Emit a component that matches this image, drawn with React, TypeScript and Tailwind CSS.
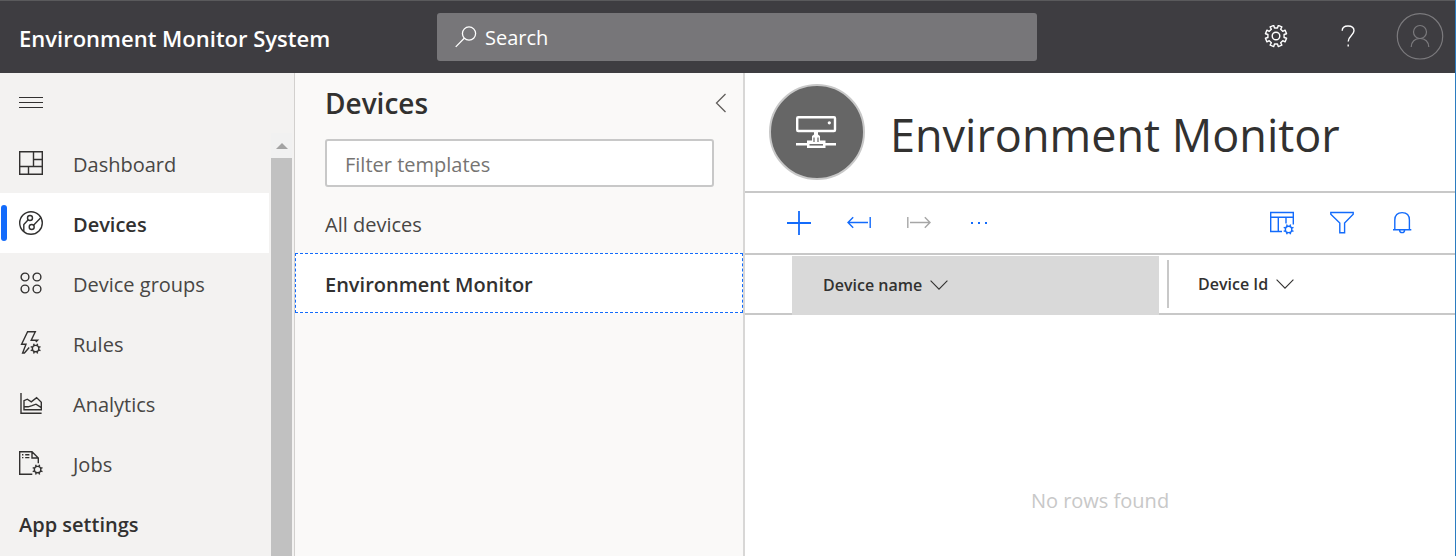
import React from "react";

function gearPath(cx: number, cy: number, outer: number, inner: number, teeth = 8) {
  const step = (Math.PI * 2) / teeth;
  const at = (r: number, a: number) =>
    `${(cx + r * Math.cos(a)).toFixed(2)} ${(cy + r * Math.sin(a)).toFixed(2)}`;
  const points: string[] = [];
  for (let i = 0; i < teeth; i++) {
    const a = i * step - Math.PI / 2 + step / 2;
    points.push(at(inner, a - step * 0.27), at(outer, a - step * 0.23), at(outer, a + step * 0.23), at(inner, a + step * 0.27));
  }
  return `M${points.join("L")}Z`;
}

/* Eight short spokes around a ring, used as a badge on larger icons. */
function MiniGear({ cx, cy }: { cx: number; cy: number }) {
  const spokes = Array.from({ length: 8 }, (_, i) => {
    const a = (i * Math.PI) / 4 + Math.PI / 8;
    const c = Math.cos(a);
    const s = Math.sin(a);
    return `M${(cx + 3.2 * c).toFixed(2)} ${(cy + 3.2 * s).toFixed(2)}L${(cx + 5.3 * c).toFixed(2)} ${(cy + 5.3 * s).toFixed(2)}`;
  }).join("");
  return (
    <>
      <circle cx={cx} cy={cy} r="3.2" />
      <path d={spokes} />
    </>
  );
}

function Icon({ children, className = "size-6" }: { children: React.ReactNode; className?: string }) {
  return (
    <svg viewBox="0 0 24 24" fill="none" stroke="currentColor" strokeWidth="1.4" aria-hidden="true" className={`${className} shrink-0`}>
      {children}
    </svg>
  );
}

const navItems = [
  {
    label: "Dashboard",
    icon: <path d="M.7.7H23.3V23.3H.7ZM14.5.7V15.5M.7 15.5H23.3M14.5 8.5H23.3M9.5 15.5V23.3" />,
  },
  {
    label: "Devices",
    active: true,
    icon: (
      <>
        <circle cx="12" cy="12" r="11.3" />
        <circle cx="11" cy="7" r="2.5" />
        <circle cx="12.7" cy="16" r="2.5" />
        <path d="M9.2 8.8 4.8 13.6V20.5M14.5 14.2 22 6.6" />
      </>
    ),
  },
  {
    label: "Device groups",
    icon: (
      <>
        <circle cx="6" cy="6" r="3.9" />
        <circle cx="18" cy="6" r="3.9" />
        <circle cx="6" cy="18" r="3.9" />
        <circle cx="18" cy="18" r="3.9" />
      </>
    ),
  },
  {
    label: "Rules",
    icon: (
      <>
        <path d="M10.2 16.5 5.4 22H3.6L7 13.2H2.6L8.6.8H16.3L12.2 9.2H18.6L16.8 11" />
        <MiniGear cx={16.6} cy={17.6} />
      </>
    ),
  },
  {
    label: "Analytics",
    icon: <path d="M2 2V22.2H22.6M5 18.8V9.7L8.3 8.2 12.3 10.8 17.6 6.6 22.3 11.3V18.8ZM5 15.8H9.2L13 14.6 17 13.2 22.3 16.6" />,
  },
  {
    label: "Jobs",
    icon: (
      <>
        <path d="M13.3 23.3H.7V.7H13L19.3 7V12.3M13 .7V7H19.3M3 3.7H4.4M6.2 3.7H10.4M3 6.6H4.4M6.2 6.6H10.4" />
        <MiniGear cx={18.6} cy={18.6} />
      </>
    ),
  },
];

function Header() {
  return (
    <header className="flex h-[73px] shrink-0 items-center border-t border-[#5a5a5c] bg-[#3e3d41] pr-[11px] text-white">
      <h1 className="w-[437px] shrink-0 pl-[19px] pt-0.5 text-[22px] font-semibold">Environment Monitor System</h1>
      <label className="flex h-12 max-w-[600px] flex-1 items-center gap-2 rounded-[3px] bg-[#777679] pl-[18px]">
        <Icon className="size-[22px]">
          <circle cx="15.3" cy="8.2" r="7.2" />
          <path d="M10.1 13.4 .8 22.8" />
        </Icon>
        <input
          type="search"
          aria-label="Search"
          placeholder="Search"
          className="min-w-0 flex-1 bg-transparent pt-0.5 text-xl outline-none placeholder:text-white"
        />
      </label>
      <div className="ml-auto flex items-center gap-12">
        <button type="button" aria-label="Settings">
          <Icon>
            <path d={gearPath(12, 11, 10.8, 8.2)} strokeLinejoin="round" />
            <circle cx="12" cy="11" r="3.8" />
          </Icon>
        </button>
        <button type="button" aria-label="Help">
          <Icon>
            <path d="M6.2 5.8C6.2 2.6 8.6 1 12 1S18 2.8 18 5.8C18 10 12.2 11 12.2 16.4M12.2 19.6V21.4" />
          </Icon>
        </button>
        <button type="button" aria-label="Account" className="-ml-3 text-[#7b7a7d]">
          <svg viewBox="0 0 48 48" fill="none" stroke="currentColor" strokeWidth="1.2" aria-hidden="true" className="size-12">
            <circle cx="24" cy="23.3" r="22.7" />
            <circle cx="24" cy="19" r="6.5" />
            <path d="M15.2 34C15.2 28.6 19 25.5 24 25.5S32.8 28.6 32.8 34" />
          </svg>
        </button>
      </div>
    </header>
  );
}

function SideNav() {
  return (
    <nav className="flex w-[295px] shrink-0 flex-col border-r border-[#d2d0ce] bg-[#f3f2f1] text-[#323130]">
      <button type="button" aria-label="Toggle navigation" className="flex h-[60px] shrink-0 items-center pl-[19px]">
        <Icon>
          <path d="M0 6.5H24M0 11.5H24M0 16.5H24" strokeWidth="1" />
        </Icon>
      </button>
      <div className="flex flex-1 justify-between">
        <div className="w-[269px]">
          <ul>
            {navItems.map((item) => (
              <li key={item.label} className={item.active ? "bg-white font-semibold" : "text-[#484644]"}>
                <a href="#" className="flex h-[60px] items-center">
                  <span className={item.active ? "ml-px h-9 w-1.5 rounded-[3px] bg-[#136bfb]" : "ml-px h-9 w-1.5"} />
                  <span className="ml-3 text-[#323130]">
                    <Icon>{item.icon}</Icon>
                  </span>
                  <span className="ml-[30px] pt-1 text-xl">{item.label}</span>
                </a>
              </li>
            ))}
          </ul>
          <h2 className="flex h-[60px] items-center pl-[19px] pt-1 text-xl font-semibold">App settings</h2>
        </div>
        <div className="mr-0.5 flex w-[21px] flex-col bg-[#f1f1f1]">
          <span className="flex h-[25px] items-center justify-center text-[#a3a3a3]">
            <svg viewBox="0 0 12 6" fill="currentColor" aria-hidden="true" className="w-3">
              <path d="M6 0 12 6H0Z" />
            </svg>
          </span>
          <span className="flex-1 bg-[#c1c1c1]" />
        </div>
      </div>
    </nav>
  );
}

function TemplatePanel() {
  return (
    <aside className="w-[450px] shrink-0 border-r-2 border-[#d8d7d6] bg-[#faf9f8] text-[#323130]">
      <div className="flex h-[66px] items-center justify-between pb-1.5 pl-[30px] pr-4">
        <h2 className="text-[28px] font-semibold">Devices</h2>
        <button type="button" aria-label="Collapse panel" className="text-[#605e5c]">
          <svg viewBox="0 0 12 20" fill="none" stroke="currentColor" strokeWidth="1.3" aria-hidden="true" className="h-5 w-3">
            <path d="M10.5 1 1.5 10 10.5 19" />
          </svg>
        </button>
      </div>
      <div className="pl-[30px] pr-[29px]">
        <input
          aria-label="Filter templates"
          placeholder="Filter templates"
          className="block h-12 w-full rounded-[3px] border-2 border-[#c8c8c8] bg-white pl-[18px] pt-0.5 text-xl outline-none placeholder:text-[#767472]"
        />
      </div>
      <ul className="mt-1.5 text-xl">
        <li>
          <a href="#" className="flex h-[60px] items-center pl-[30px] pt-1 text-[#484644]">All devices</a>
        </li>
        <li>
          <a href="#" className="flex h-[60px] items-center border border-dashed border-[#136bfb] bg-white pl-[29px] pt-1 font-semibold">
            Environment Monitor
          </a>
        </li>
      </ul>
    </aside>
  );
}

function Toolbar() {
  return (
    <div className="flex h-[62px] items-center justify-between border-b-2 border-[#c8c8c8] pl-[42px] pr-[41px] text-[#136bfb]">
      <div className="flex items-center gap-9">
        <button type="button" aria-label="New">
          <Icon>
            <path d="M12 0V24M0 12H24" strokeWidth="1.8" />
          </Icon>
        </button>
        <button type="button" aria-label="Import">
          <Icon>
            <path d="M21 11.5H1M6.2 6.2 1 11.5 6.2 16.8M23.2 6V17" />
          </Icon>
        </button>
        <button type="button" aria-label="Export" className="text-[#a6a6a6]">
          <Icon>
            <path d="M3 11.5H23M17.8 6.2 23 11.5 17.8 16.8M.8 6V17" />
          </Icon>
        </button>
        <button type="button" aria-label="More">
          <Icon>
            <path d="M4 12H6M11 12H13M18 12H20" strokeWidth="2" />
          </Icon>
        </button>
      </div>
      <div className="flex items-center gap-9">
        <button type="button" aria-label="Column options">
          <Icon>
            <path d="M12 20.5H.7V1.5H23.3V13.5M.7 6.3H23.3M8.3 6.3V20.5M16 6.3V12.5" />
            <MiniGear cx={18.6} cy={18.4} />
          </Icon>
        </button>
        <button type="button" aria-label="Filter">
          <Icon>
            <path d="M.8 1.5H23.2V3.2L14.6 12V21.8H9.8V12L.8 3.2Z" />
          </Icon>
        </button>
        <button type="button" aria-label="Notifications">
          <Icon>
            <path d="M3 18.7H21.3M4.8 18.7V9C4.8 4.5 7.5 1.6 12.1 1.6S19.4 4.5 19.4 9V18.7M9.6 18.9C9.6 20.6 10.7 21.6 12.1 21.6S14.6 20.6 14.6 18.9" />
          </Icon>
        </button>
      </div>
    </div>
  );
}

function Chevron() {
  return (
    <svg viewBox="0 0 18 10" fill="none" stroke="currentColor" strokeWidth="1.1" aria-hidden="true" className="w-[18px]">
      <path d="M.6 .7 9 9.1 17.4 .7" />
    </svg>
  );
}

function DeviceView() {
  return (
    <main className="flex min-w-0 flex-1 flex-col bg-white text-[#323130]">
      <div className="flex h-[120px] items-center gap-[26px] border-b-2 border-[#c8c8c8] pl-6">
        <span className="flex size-24 items-center justify-center rounded-full border-2 border-[#c8c8c8] bg-[#666666] text-white">
          <svg viewBox="0 0 42 32" fill="none" aria-hidden="true" className="w-[42px]">
            <rect x="1.2" y="1.2" width="37.8" height="13.8" rx="1" stroke="currentColor" strokeWidth="2.4" />
            <circle cx="33.3" cy="6.8" r="1.6" fill="currentColor" />
            <path d="M0 27H11V24.5H16V20L18 18.5V16H22V18.5L24 20V24.5H29.5V27H40V29.5H29.5V32H11V29.5H0Z" fill="currentColor" />
            <path d="M18 21.5V26M22 21.5V26" stroke="#666666" strokeWidth="1.2" />
            <path d="M13.5 28.8H27" stroke="#666666" strokeWidth="1.5" />
          </svg>
        </span>
        <h2 className="-ml-px pt-1.5 text-[45px]">Environment Monitor</h2>
      </div>
      <Toolbar />
      <table className="w-full table-fixed border-separate border-spacing-0 text-left text-base">
        <colgroup>
          <col className="w-[47px]" />
          <col className="w-[367px]" />
          <col />
        </colgroup>
        <thead>
          <tr>
            <th aria-label="Select" className="h-[60px] border-b-2 border-[#c8c8c8] p-0" />
            <th className="border-b-2 border-t border-b-[#d9d9d9] border-t-white bg-[#d9d9d9] p-0 pl-[31px] font-semibold">
              <button type="button" className="flex items-center gap-2">
                Device name
                <Chevron />
              </button>
            </th>
            <th className="border-b-2 border-[#c8c8c8] p-0 pl-2 font-semibold">
              <button type="button" className="flex h-12 items-center gap-2 border-l-2 border-[#c8c8c8] pl-[29px]">
                Device Id
                <Chevron />
              </button>
            </th>
          </tr>
        </thead>
      </table>
      <p className="flex flex-1 items-end justify-center pb-[41px] text-xl text-[#c8c8c8]">No rows found</p>
    </main>
  );
}

export default function App() {
  return (
    <div className="flex min-h-screen flex-col border-r border-[#2b7cc0] font-['Open_Sans','Noto_Sans',sans-serif]">
      <Header />
      <div className="flex flex-1">
        <SideNav />
        <TemplatePanel />
        <DeviceView />
      </div>
    </div>
  );
}
